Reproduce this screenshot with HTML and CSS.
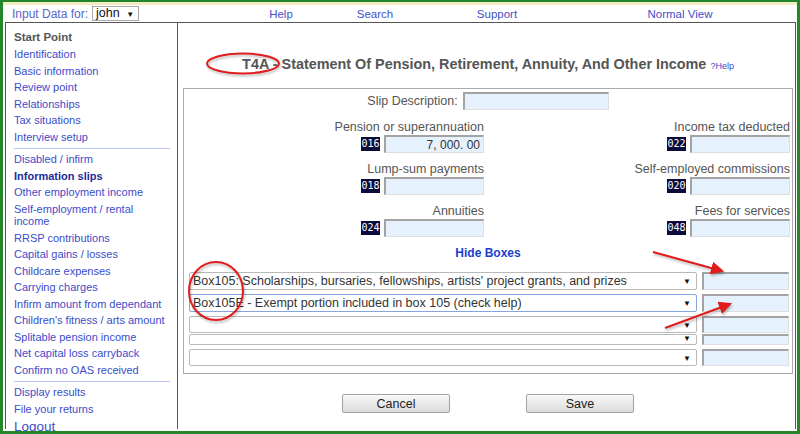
FILE: index.html
```html
<!DOCTYPE html>
<html lang="en">
<head>
  <meta charset="UTF-8">
  <meta name="viewport" content="width=device-width, initial-scale=1.0">
  <title>T4A - Information slips</title>
  <link rel="stylesheet" href="styles.css">
</head>
<body>

<div class="window">
  <div class="topbar">
    <div class="who">
      <span class="who-label">Input Data for:</span>
      <span class="who-select">john<span class="caret">▼</span></span>
    </div>
    <a class="top-link" href="#">Help</a>
    <a class="top-link" href="#">Search</a>
    <a class="top-link" href="#">Support</a>
    <a class="top-link" href="#">Normal View</a>
  </div>

  <div class="layout">
    <!-- menu de la izquierda -->
    <div class="sidebar">
      <div class="side-title">Start Point</div>
      <a class="side-link" href="#">Identification</a>
      <a class="side-link" href="#">Basic information</a>
      <a class="side-link" href="#">Review point</a>
      <a class="side-link" href="#">Relationships</a>
      <a class="side-link" href="#">Tax situations</a>
      <a class="side-link" href="#">Interview setup</a>
      <div class="side-sep"></div>
      <a class="side-link" href="#">Disabled / infirm</a>
      <a class="side-link current" href="#">Information slips</a>
      <a class="side-link" href="#">Other employment income</a>
      <a class="side-link" href="#">Self-employment / rental income</a>
      <a class="side-link" href="#">RRSP contributions</a>
      <a class="side-link" href="#">Capital gains / losses</a>
      <a class="side-link" href="#">Childcare expenses</a>
      <a class="side-link" href="#">Carrying charges</a>
      <a class="side-link" href="#">Infirm amount from dependant</a>
      <a class="side-link" href="#">Children's fitness / arts amount</a>
      <a class="side-link" href="#">Splitable pension income</a>
      <a class="side-link" href="#">Net capital loss carryback</a>
      <a class="side-link" href="#">Confirm no OAS received</a>
      <div class="side-sep"></div>
      <a class="side-link" href="#">Display results</a>
      <a class="side-link" href="#">File your returns</a>
      <a class="side-link logout" href="#">Logout</a>
    </div>

    <div class="main">
      <h1 class="slip-title">T4A - Statement Of Pension, Retirement, Annuity, And Other Income <a class="help-link" href="#">?Help</a></h1>

      <div class="slip-box">
        <div class="desc-row">
          <span class="field-label">Slip Description:</span>
          <input class="amount desc" type="text">
        </div>

        <div class="fields">
          <div class="field">
            <div class="field-label">Pension or superannuation</div>
            <div class="field-input"><span class="code">016</span><input class="amount" type="text" value="7, 000. 00"></div>
          </div>
          <div class="field">
            <div class="field-label">Income tax deducted</div>
            <div class="field-input"><span class="code">022</span><input class="amount" type="text"></div>
          </div>
          <div class="field">
            <div class="field-label">Lump-sum payments</div>
            <div class="field-input"><span class="code">018</span><input class="amount" type="text"></div>
          </div>
          <div class="field">
            <div class="field-label">Self-employed commissions</div>
            <div class="field-input"><span class="code">020</span><input class="amount" type="text"></div>
          </div>
          <div class="field">
            <div class="field-label">Annuities</div>
            <div class="field-input"><span class="code">024</span><input class="amount" type="text"></div>
          </div>
          <div class="field">
            <div class="field-label">Fees for services</div>
            <div class="field-input"><span class="code">048</span><input class="amount" type="text"></div>
          </div>
        </div>

        <div class="hide-boxes"><a href="#">Hide Boxes</a></div>

        <div class="box-rows">
          <div class="box-row">
            <div class="box-select">Box105: Scholarships, bursaries, fellowships, artists' project grants, and prizes<span class="caret">▼</span></div>
            <input class="amount box-amount" type="text">
          </div>
          <div class="box-row">
            <div class="box-select focused">Box105E - Exempt portion included in box 105 (check help)<span class="caret">▼</span></div>
            <input class="amount box-amount" type="text">
          </div>
          <div class="box-row low">
            <div class="box-select"><span class="caret">▼</span></div>
            <input class="amount box-amount" type="text">
          </div>
          <div class="box-row short">
            <div class="box-select"><span class="caret">▼</span></div>
            <input class="amount box-amount" type="text">
          </div>
          <div class="box-row low">
            <div class="box-select"><span class="caret">▼</span></div>
            <input class="amount box-amount" type="text">
          </div>
        </div>
      </div>

      <div class="actions">
        <button class="btn">Cancel</button>
        <button class="btn">Save</button>
      </div>
    </div>
  </div>
</div>

<!-- marcas rojas encima de la captura -->
<svg class="marks" width="800" height="434" viewBox="0 0 800 434">
  <defs>
    <marker id="head" markerWidth="6" markerHeight="6" refX="5" refY="3" orient="auto" markerUnits="strokeWidth">
      <path d="M0,0 L6,3 L0,6 Z" fill="#e01c1c"/>
    </marker>
  </defs>
  <ellipse cx="243" cy="63.5" rx="36" ry="10" fill="none" stroke="#e01c1c" stroke-width="2"/>
  <ellipse cx="216" cy="291" rx="27" ry="29" fill="none" stroke="#e01c1c" stroke-width="2"/>
  <line x1="653" y1="252" x2="722" y2="271" stroke="#e01c1c" stroke-width="2.2" marker-end="url(#head)"/>
  <line x1="665" y1="328" x2="730" y2="304" stroke="#e01c1c" stroke-width="2.2" marker-end="url(#head)"/>
</svg>

</body>
</html>
```

FILE: styles.css
```css
body {
  margin: 0;
  position: relative;
  height: 434px;
  overflow: hidden;
  background: #24882b;
  font-family: "Liberation Sans", Arial, sans-serif;
}
.window {
  margin: 2px 3px 0 3px;
  height: 426px;
  background: #fff;
  border-top: 3px solid #f3edc3;
  overflow: hidden;
}

/* barra de arriba */
.topbar {
  display: grid;
  grid-template-columns: 230px 96px 92px 152px 214px;
  align-items: center;
  height: 17px;
}
.who {
  display: flex;
  align-items: center;
  gap: 4px;
  padding-left: 9px;
}
.who-label {
  font-size: 12px;
  color: #5468c9;
}
.who-select {
  position: relative;
  box-sizing: border-box;
  width: 47px;
  height: 15px;
  border: 1px solid #a9a9a9;
  padding-left: 3px;
  font-size: 12.5px;
  line-height: 13px;
  color: #111;
}
.who-select .caret {
  position: absolute;
  right: 4px;
  top: 1px;
  font-size: 8px;
}
.top-link {
  text-align: center;
  font-size: 11.5px;
  color: #3e50c8;
  text-decoration: none;
}

.layout {
  display: flex;
  height: 406px;
  margin: 0 1px 0 2px;
  border: 1px solid #555;
  border-bottom: none;
}

/* menu lateral */
.sidebar {
  width: 163px;
  padding: 5px 0 0 8px;
  border-right: 1px solid #555;
}
.side-title {
  font-size: 11.5px;
  font-weight: bold;
  line-height: 14px;
  padding: 2px 0;
  color: #555;
}
.side-link {
  display: block;
  margin-right: 8px;
  font-size: 11px;
  line-height: 12.5px;
  padding: 2px 0;
  color: #3b4cca;
  text-decoration: none;
}
.side-link.current {
  font-weight: bold;
  color: #1d2b9c;
}
.side-link.logout {
  font-size: 13.5px;
  line-height: 14px;
  padding-top: 3px;
}
.side-sep {
  margin: 2.5px 7px 2.5px 0;
  border-top: 1px solid #bac4f2;
}

/* zona principal */
.main {
  flex: 1;
  padding: 0 2px 0 5px;
}
.slip-title {
  margin: 32px 0 15px;
  text-align: center;
  font-size: 14.4px;
  line-height: 18px;
  color: #555;
}
.help-link {
  font-size: 9px;
  line-height: 10px;
  font-weight: normal;
  color: #3b4cca;
  text-decoration: none;
}
.slip-box {
  border: 1px solid #ababab;
  padding: 3px 0 7px;
}
.desc-row {
  display: flex;
  justify-content: center;
  align-items: center;
  gap: 5px;
}
.field-label {
  font-size: 12.5px;
  line-height: 16px;
  color: #555;
}
input.amount {
  box-sizing: border-box;
  height: 18px;
  margin: 0;
  padding: 0 3px;
  background: #e5f1fd;
  border-style: solid;
  border-width: 2px 1px 1px 2px;
  border-color: #a3a3a3 #dedede #dedede #a3a3a3;
  font-family: "Liberation Sans", Arial, sans-serif;
  font-size: 12px;
  color: #333;
  text-align: right;
}
input.desc {
  width: 146px;
}
.fields {
  display: grid;
  grid-template-columns: 300px 306px;
  margin-top: 9px;
  row-gap: 8px;
}
.field {
  text-align: right;
}
.field-input {
  display: flex;
  justify-content: flex-end;
  align-items: center;
  gap: 4px;
}
.field-input input.amount {
  width: 100px;
}
.code {
  width: 19px;
  height: 14px;
  background: #0b0b3c;
  color: #fff;
  font-family: "DejaVu Sans Mono", monospace;
  font-size: 10px;
  line-height: 14px;
  text-align: center;
}
.hide-boxes {
  margin-top: 8px;
  text-align: center;
  font-size: 12px;
  line-height: 16px;
  font-weight: bold;
}
.hide-boxes a {
  color: #1b3fce;
  text-decoration: none;
}
.box-rows {
  margin-top: 11px;
  padding-left: 5px;
}
.box-row {
  display: flex;
  gap: 5px;
  height: 18px;
  margin-bottom: 4px;
}
.box-row.low {
  height: 17px;
}
.box-row.short {
  height: 11px;
  margin-top: -3px;
}
.box-select {
  position: relative;
  box-sizing: border-box;
  width: 508px;
  height: 100%;
  overflow: hidden;
  border: 1px solid #b9b9b9;
  border-radius: 2px;
  padding-left: 3px;
  font-size: 12.5px;
  line-height: 16px;
  color: #333;
  white-space: nowrap;
}
.box-select.focused {
  border-color: #86a5dd;
}
.box-select .caret {
  position: absolute;
  right: 5px;
  top: 1px;
  font-size: 8px;
  color: #111;
}
.short .box-select .caret {
  top: -4px;
}
input.box-amount {
  width: 87px;
  height: 100%;
}
.box-row:last-child {
  margin-bottom: 0;
}

.actions {
  display: flex;
  justify-content: center;
  gap: 76px;
  margin-top: 20px;
}
.btn {
  width: 108px;
  height: 19px;
  padding: 0;
  border: 1px solid #a2a2a2;
  border-radius: 2px;
  background: linear-gradient(#f8f8f8, #dcdcdc);
  font-family: "Liberation Sans", Arial, sans-serif;
  font-size: 12.5px;
  color: #222;
}

.marks {
  position: absolute;
  top: 0;
  left: 0;
  pointer-events: none;
  filter: drop-shadow(1px 2px 1px rgba(0, 0, 0, 0.25));
}
```
